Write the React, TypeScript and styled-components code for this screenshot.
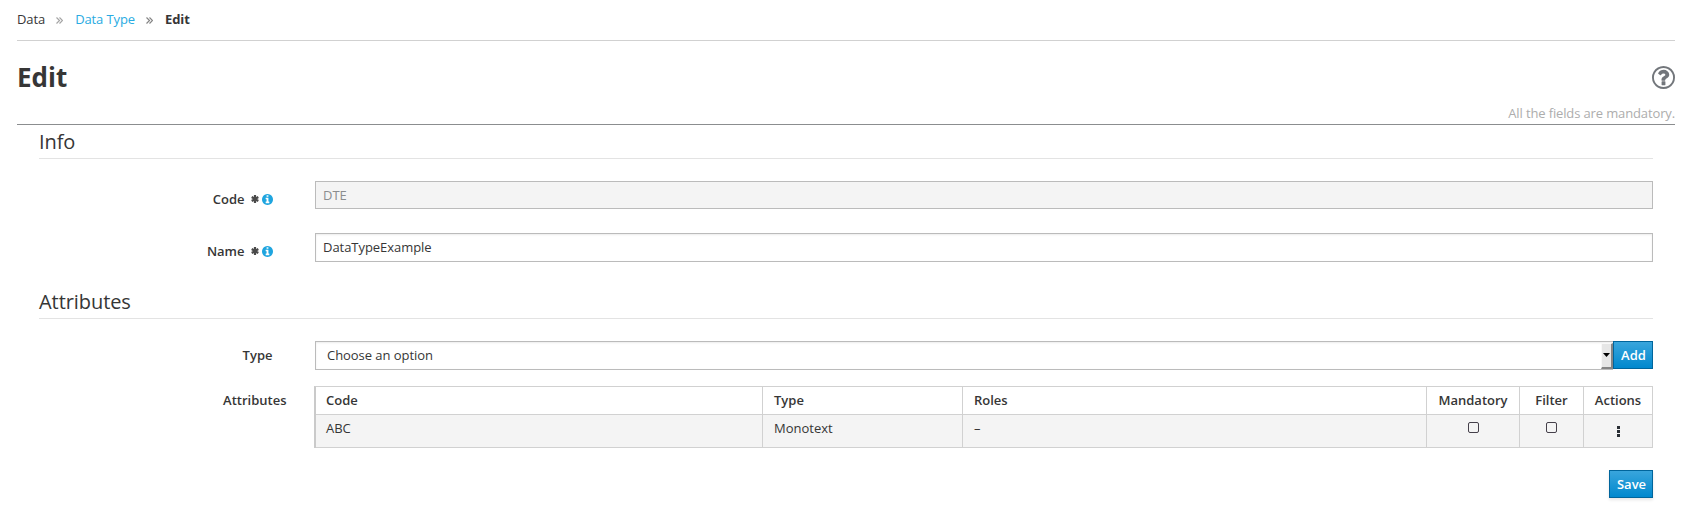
import React from 'react';
import styled, { createGlobalStyle } from 'styled-components';

const GlobalStyle = createGlobalStyle`
  *, *::before, *::after { box-sizing: border-box; }
  body {
    margin: 0;
    background: #fff;
    color: #363636;
    font-family: 'Open Sans', 'Liberation Sans', sans-serif;
    font-size: 13px;
    line-height: 20px;
  }
  input, select, button { font: inherit; color: inherit; }
`;

const Page = styled.main`
  padding: 0 20px 0 17px;
  height: 506px;
`;

const Breadcrumb = styled.nav`
  display: flex;
  align-items: center;
  height: 41px;
  padding-bottom: 2px;
  border-bottom: 1px solid #d1d1d1;
`;

const Crumb = styled.span<{ $kind?: 'link' | 'current' }>`
  color: ${p => (p.$kind === 'link' ? '#29abe2' : '#363636')};
  font-weight: ${p => (p.$kind === 'current' ? 700 : 400)};
  letter-spacing: -0.1px;
`;

const SeparatorIcon = styled.svg`
  flex: none;
  width: 7px;
  height: 7px;
  margin: 2px 12px 0 11px;
  fill: none;
`;

const TitleBar = styled.header`
  display: flex;
  justify-content: space-between;
  height: 62px;
  padding-top: 18px;
`;

const Title = styled.h1`
  margin: 0;
  font-size: 26px;
  line-height: 36px;
  font-weight: 700;
`;

const HelpIcon = styled.svg`
  width: 23px;
  height: 23px;
  margin-top: 7px;
`;

const MandatoryNote = styled.p`
  margin: 0;
  height: 22px;
  border-bottom: 1px solid #8b8d8f;
  color: #adadad;
  text-align: right;
  letter-spacing: -0.13px;
`;

const Form = styled.form`
  padding: 0 22px;
`;

const Legend = styled.h2`
  margin: 0;
  height: 34px;
  border-bottom: 1px solid #e3e3e3;
  font-size: 20px;
  line-height: 34px;
  font-weight: 400;
  letter-spacing: -0.07px;
`;

const Fields = styled.div<{ $bottom?: number }>`
  padding: 22px 0 ${p => p.$bottom ?? 0}px;
`;

const Row = styled.div<{ $gap?: number }>`
  display: grid;
  grid-template-columns: 276px 1fr;
  margin-bottom: ${p => p.$gap ?? 0}px;
`;

const Label = styled.label<{ $right?: number; $top?: number }>`
  display: flex;
  justify-content: flex-end;
  align-items: center;
  height: 20px;
  margin-top: ${p => p.$top ?? 8}px;
  padding-right: ${p => p.$right ?? 42.5}px;
  font-weight: 600;
`;

const RequiredIcon = styled.svg`
  width: 8px;
  height: 8px;
  margin: 0 3px 1px 6px;
  stroke: #4a4a4a;
  stroke-width: 2.2;
`;

const InfoIcon = styled.svg`
  width: 11px;
  height: 11px;
  fill: #1fa5df;
`;

const TextInput = styled.input<{ $height: number }>`
  width: 100%;
  height: ${p => p.$height}px;
  padding: 0 7px 2px;
  border: 1px solid #bbb;
  border-radius: 0;
  background: #fff;
  box-shadow: inset 0 1px 2px rgba(0, 0, 0, 0.08);
  letter-spacing: -0.05px;
  &:disabled { padding-bottom: 0; background: #f4f4f4; color: #8b8d8f; box-shadow: none; }
`;

const SelectGroup = styled.div`
  display: flex;
`;

const Select = styled.button`
  display: flex;
  justify-content: space-between;
  flex: 1;
  height: 29px;
  padding: 0 0 0 11px;
  border: 1px solid #bbb;
  border-right: 0;
  background: #fff;
  box-shadow: inset 0 1px 2px rgba(0, 0, 0, 0.08);
  line-height: 26px;
  text-align: left;
  letter-spacing: -0.05px;
`;

const SelectArrow = styled.span`
  display: flex;
  align-items: center;
  justify-content: center;
  width: 12px;
  height: 26px;
  margin-top: 1px;
  background: #e6e6e6;
  border: solid;
  border-width: 1px 2px 2px 1px;
  border-color: #f8f8f8 #858585 #858585 #f8f8f8;
  svg { margin-bottom: 2px; }
`;

const PrimaryButton = styled.button<{ $width: number; $raised?: boolean }>`
  width: ${p => p.$width}px;
  height: 28px;
  padding: 0 0 0 1px;
  border: 1px solid #00659c;
  background: linear-gradient(#39a5dc, #0088ce);
  box-shadow: ${p => (p.$raised ? '0 2px 3px rgba(3, 3, 3, 0.1)' : 'none')};
  color: #fff;
  font-weight: 600;
`;

const Table = styled.div`
  display: grid;
  grid-template-columns: 447px 200px 464px 93px 64px 69px;
  margin-left: -1px;
  border-top: 1px solid #d1d1d1;
  border-left: 2px solid #cacaca;
`;

const Cell = styled.div<{ $head?: boolean; $center?: boolean; $pad?: number }>`
  height: ${p => (p.$head ? 28 : 33)}px;
  padding: 3px ${p => (p.$center ? 10 : 0)}px 0 ${p => p.$pad ?? 10}px;
  border-right: 1px solid #d1d1d1;
  border-bottom: 1px solid #d1d1d1;
  background: ${p => (p.$head ? '#fff' : '#f4f4f4')};
  font-weight: ${p => (p.$head ? 600 : 400)};
  text-align: ${p => (p.$center ? 'center' : 'left')};
  white-space: nowrap;
`;

const EmptyBox = styled.span`
  display: block;
  width: 11px;
  height: 11px;
  margin: 4px auto 0;
  border: 1px solid #45404a;
  border-radius: 2px;
`;

const Kebab = styled.svg`
  display: block;
  width: 3px;
  height: 11px;
  margin: 8px auto 0;
`;

const Actions = styled.div`
  display: flex;
  justify-content: flex-end;
  margin-top: 22px;
`;

function Separator({ color }: { color: string }) {
  return (
    <SeparatorIcon viewBox="0 0 7 7" stroke={color} strokeWidth="1.200">
      <path d="M.5.5l3 3-3 3M3.500.5l3 3-3 3" />
    </SeparatorIcon>
  );
}

function Required() {
  return (
    <RequiredIcon viewBox="0 0 8 8">
      <path d="M4 0v8M.7 2l6.600 4M.7 6l6.600-4" />
    </RequiredIcon>
  );
}

function Info() {
  return (
    <InfoIcon viewBox="0 0 1536 1536">
      <path d="M1024 1248v-160q0-14-9-23t-23-9h-96V544q0-14-9-23t-23-9H544q-14 0-23 9t-9 23v160q0 14 9 23t23 9h96v320h-96q-14 0-23 9t-9 23v160q0 14 9 23t23 9h448q14 0 23-9t9-23zM896 352V192q0-14-9-23t-23-9H672q-14 0-23 9t-9 23v160q0 14 9 23t23 9h192q14 0 23-9t9-23zM1536 768q0 209-103 385.500T1153.500 1433 768 1536t-385.500-103T103 1153.500 0 768t103-385.500T382.500 103 768 0t385.500 103T1433 382.500 1536 768z" />
    </InfoIcon>
  );
}

export default function App() {
  return (
    <Page>
      <GlobalStyle />
      <Breadcrumb>
        <Crumb>Data</Crumb>
        <Separator color="#a5a5a5" />
        <Crumb $kind="link">Data Type</Crumb>
        <Separator color="#858585" />
        <Crumb $kind="current">Edit</Crumb>
      </Breadcrumb>
      <TitleBar>
        <Title>Edit</Title>
        <HelpIcon viewBox="0 0 1536 1536" fill="#72767b" aria-label="Help">
          <path d="M896 1056v192q0 14-9 23t-23 9H672q-14 0-23-9t-9-23v-192q0-14 9-23t23-9h192q14 0 23 9t9 23zM1152 576q0 43-12.500 80.500t-28.500 61-45 47.500-48 34.500-51 29.500q-35 20-58 55.500t-23 56.500q0 14-10 27t-22 13H662q-12 0-20.500-15t-8.500-30v-36q0-67 52.500-126.500T801 686q48-22 68-45t20-61q0-33-37-58.500T767 496q-51 0-85 23-28 20-84 90-10 12-24 12-10 0-19-6L424 515q-10-8-12-20t5-22q128-217 371-217 128 0 246 91t118 229zM768 128q-130 0-248.500 51t-204 136.500-136.500 204T128 768t51 248.500 136.500 204 204 136.500 248.500 51 248.500-51 204-136.500 136.500-204 51-248.500-51-248.500-136.500-204-204-136.500T768 128zM1536 768q0 209-103 385.500T1153.500 1433 768 1536t-385.500-103T103 1153.500 0 768t103-385.500T382.500 103 768 0t385.500 103T1433 382.500 1536 768z" />
        </HelpIcon>
      </TitleBar>
      <MandatoryNote>All the fields are mandatory.</MandatoryNote>
      <Form onSubmit={e => e.preventDefault()}>
        <Legend>Info</Legend>
        <Fields $bottom={23}>
          <Row $gap={24}>
            <Label>Code<Required /><Info /></Label>
            <TextInput $height={28} defaultValue="DTE" disabled />
          </Row>
          <Row>
            <Label>Name<Required /><Info /></Label>
            <TextInput $height={29} defaultValue="DataTypeExample" />
          </Row>
        </Fields>
        <Legend>Attributes</Legend>
        <Fields>
          <Row $gap={16}>
            <Label $top={4}>Type</Label>
            <SelectGroup>
              <Select type="button">
                Choose an option
                <SelectArrow>
                  <svg width="7" height="4" viewBox="0 0 7 4"><path d="M0 0h7L3.500 4z" fill="#000" /></svg>
                </SelectArrow>
              </Select>
              <PrimaryButton $width={40} type="button">Add</PrimaryButton>
            </SelectGroup>
          </Row>
          <Row>
            <Label $top={4} $right={28.5}>Attributes</Label>
            <Table>
              <Cell $head>Code</Cell>
              <Cell $head $pad={11}>Type</Cell>
              <Cell $head $pad={11}>Roles</Cell>
              <Cell $head $center>Mandatory</Cell>
              <Cell $head $center>Filter</Cell>
              <Cell $head $center>Actions</Cell>
              <Cell>ABC</Cell>
              <Cell $pad={11}>Monotext</Cell>
              <Cell $pad={11}>–</Cell>
              <Cell $center><EmptyBox /></Cell>
              <Cell $center><EmptyBox /></Cell>
              <Cell $center>
                <Kebab viewBox="0 0 3 11" fill="#292e34">
                  <rect width="3" height="3" />
                  <rect y="4" width="3" height="3" />
                  <rect y="8" width="3" height="3" />
                </Kebab>
              </Cell>
            </Table>
          </Row>
        </Fields>
        <Actions>
          <PrimaryButton $width={44} $raised type="submit">Save</PrimaryButton>
        </Actions>
      </Form>
    </Page>
  );
}
